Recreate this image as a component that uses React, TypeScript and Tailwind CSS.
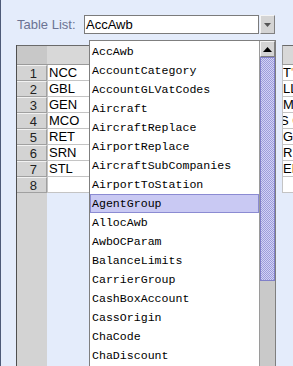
import React from 'react';

const tables = [
  'AccAwb',
  'AccountCategory',
  'AccountGLVatCodes',
  'Aircraft',
  'AircraftReplace',
  'AirportReplace',
  'AircraftSubCompanies',
  'AirportToStation',
  'AgentGroup',
  'AllocAwb',
  'AwbOCParam',
  'BalanceLimits',
  'CarrierGroup',
  'CashBoxAccount',
  'CassOrigin',
  'ChaCode',
  'ChaDiscount',
  'ChaRate',
];

const rows = [
  { code: 'NCC', tail: 'T' },
  { code: 'GBL', tail: 'LL' },
  { code: 'GEN', tail: 'MA' },
  { code: 'MCO', tail: 'S C' },
  { code: 'RET', tail: 'GIN' },
  { code: 'SRN', tail: 'RE' },
  { code: 'STL', tail: 'EM' },
  { code: '', tail: '' },
];

const arial = { fontFamily: '"Liberation Sans", Arial, sans-serif' };

export default function App() {
  const selected = 'AgentGroup';

  return (
    <div
      className="relative flex h-[366px] w-[293px] flex-col overflow-hidden border-l border-[#4d5a78] bg-[#e4ecfb]"
      style={arial}
    >
      {/* table picker */}
      <div className="flex h-[45px] items-start pl-[16px] pt-[15px]">
        <span className="w-[67px] pt-[2px] text-[13px] leading-[15px] text-[#6b7393]">Table List:</span>
        <div className="flex h-[19px] w-[175px] items-center border border-[#7b7b7b] bg-white pl-[1px] text-[13px] text-black">
          AccAwb
        </div>
        <div className="ml-[1px] flex h-[19px] w-[15px] items-center justify-center border border-t-[#f4f4f4] border-l-[#f4f4f4] border-r-[#808080] border-b-[#808080] bg-[#d4d4d4]">
          <svg width="7" height="4" viewBox="0 0 7 4">
            <path d="M0 0h7L3.5 4z" fill="#555" />
          </svg>
        </div>
      </div>

      {/* grid */}
      <div className="flex flex-1 pl-[15px]">
        <div className="flex w-[31px] flex-col border-l border-[#4f4f4f] bg-[#d3d3d3]">
          <div className="h-[20px] border-t border-b border-[#9a9a9a] border-t-[#6a6a6a] bg-[#c8c8c8]" />
          {rows.map((_, i) => (
            <div
              key={i}
              className="flex h-[16px] items-center justify-end border-t border-b border-r border-t-[#f2f2f2] border-b-[#a0a0a0] border-r-[#a0a0a0] pr-[9px] text-[13px] leading-none text-[#222]"
            >
              {i + 1}
            </div>
          ))}
        </div>
        <div className="flex w-[228px] flex-col">
          <div className="h-[20px] border-t border-b border-[#9a9a9a] border-t-[#6a6a6a] bg-[#d8d8d8]" />
          {rows.map((r, i) => (
            <div
              key={i}
              className="flex h-[16px] items-center border-b border-l border-[#c4c4c4] bg-white pl-[1px] text-[13px] leading-none text-black"
            >
              {r.code}
            </div>
          ))}
        </div>
        <div className="ml-[7px] flex flex-1 flex-col overflow-hidden">
          <div className="h-[20px] border-t border-b border-l border-[#9a9a9a] border-t-[#6a6a6a] bg-[#d8d8d8]" />
          {rows.map((r, i) => (
            <div
              key={i}
              className="flex h-[16px] items-center overflow-hidden whitespace-nowrap border-b border-l border-[#c4c4c4] bg-white text-[13px] leading-none text-black"
            >
              {i === 0 ? (
                <span>
                  T<span className="text-[#f0a030]">'</span>
                </span>
              ) : (
                <span className={i === 3 ? '-ml-[3px]' : ''}>{r.tail}</span>
              )}
            </div>
          ))}
        </div>
      </div>

      {/* open dropdown list */}
      <div className="absolute left-[88px] top-[40px] flex h-[340px] w-[187px] border border-[#7f7f7f] bg-white">
        <ul
          className="flex-1 pt-[1px]"
          style={{ fontFamily: '"Liberation Mono", "Courier New", monospace' }}
        >
          {tables.map((t) => (
            <li
              key={t}
              className={
                t === selected
                  ? 'h-[19px] border border-[#8b8bd2] bg-[#c9c9f3] pl-[1px] text-[11.6px] leading-[17px] text-black'
                  : 'h-[19px] pl-[2px] text-[11.6px] leading-[19px] text-black'
              }
            >
              {t}
            </li>
          ))}
        </ul>
        <div className="flex w-[16px] flex-col border-l border-[#9a9a9a] bg-[#c9c9c9]">
          <div className="flex h-[16px] items-center justify-center border border-t-[#f4f4f4] border-l-[#f4f4f4] border-r-[#808080] border-b-[#808080] bg-[#d4d4d4]">
            <svg width="9" height="5" viewBox="0 0 9 5">
              <path d="M4.5 0L9 5H0z" fill="#000" />
            </svg>
          </div>
          <div className="h-[224px] border border-[#8080c8] bg-[conic-gradient(#9d9dda_25%,#d2d2f6_0_50%,#9d9dda_0_75%,#d2d2f6_0)] bg-[length:2px_2px]" />
        </div>
      </div>
    </div>
  );
}
